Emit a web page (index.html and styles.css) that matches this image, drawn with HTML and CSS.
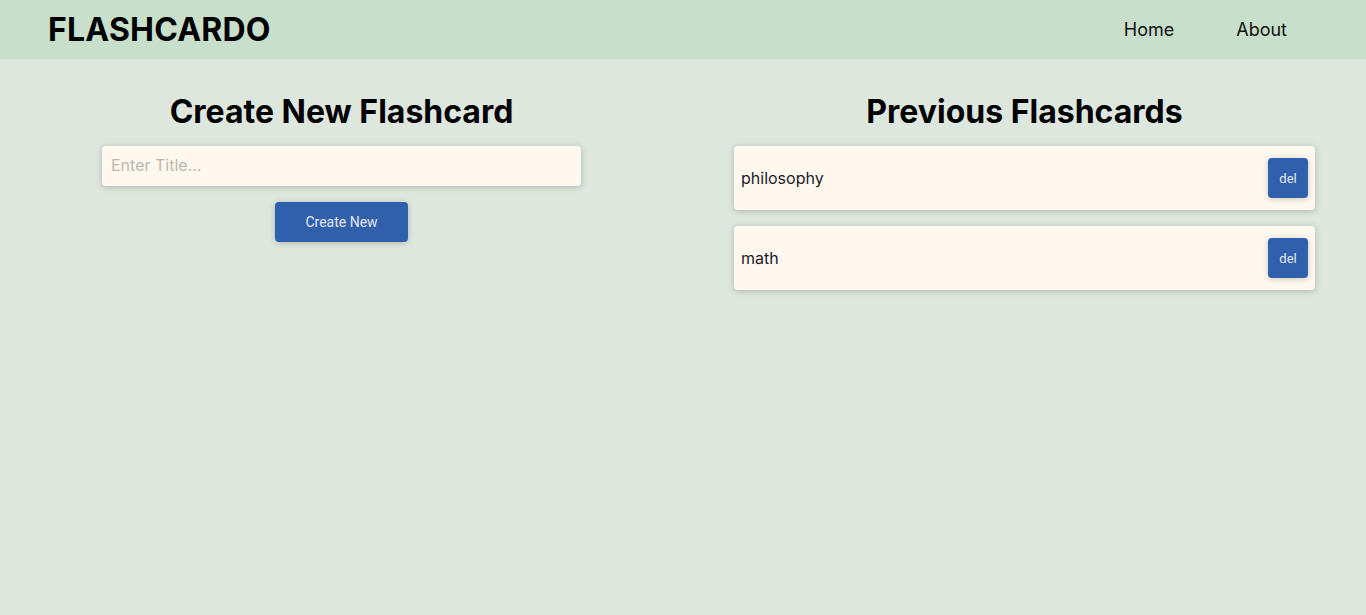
FILE: index.html
```html
<!DOCTYPE html>
<html>
<head>
<meta charset="utf-8">
<link rel="stylesheet" href="styles.css">
</head>
<body>
<header class="topbar">
  <div class="logo">FLASHCARDO</div>
  <nav class="nav">
    <a class="nav-link" href="#">Home</a>
    <a class="nav-link" href="#">About</a>
  </nav>
</header>
<main class="main">
  <section class="col">
    <h1 class="col-title">Create New Flashcard</h1>
    <input class="title-input" type="text" placeholder="Enter Title...">
    <button class="btn btn-create">Create New</button>
  </section>
  <section class="col">
    <h1 class="col-title">Previous Flashcards</h1>
    <div class="card-list">
      <div class="card"><span class="card-name">philosophy</span><button class="btn btn-del">del</button></div>
      <div class="card"><span class="card-name">math</span><button class="btn btn-del">del</button></div>
    </div>
  </section>
</main>
</body>
</html>
```
FILE: styles.css
```css
* { box-sizing: border-box; }
html, body { margin: 0; padding: 0; }
body {
  background: #dde7de;
  font-family: Inter, "Noto Sans", sans-serif;
  color: #000;
  min-height: 615px;
}
.topbar {
  height: 59px;
  background: #c8dfcb;
  display: flex;
  align-items: center;
  justify-content: space-between;
  padding: 0 47px 0 48px;
}
.logo {
  font-size: 32px;
  font-weight: 700;
  letter-spacing: 0.2px;
  line-height: 1;
  margin-top: 1px;
}
.nav { display: flex; }
.nav-link {
  font-size: 18px;
  color: #111;
  text-decoration: none;
  padding: 0 32px;
}
.nav-link + .nav-link { padding-left: 30px; }
.main {
  display: grid;
  grid-template-columns: 1fr 1fr;
}
.col {
  display: flex;
  flex-direction: column;
  align-items: center;
  padding-top: 33px;
}
.col-title {
  font-size: 32px;
  font-weight: 700;
  margin: 0 0 15px;
  line-height: 39px;
}
.title-input {
  width: 479px;
  height: 40px;
  border: none;
  border-radius: 4px;
  background: #fff8ee;
  box-shadow: 0 1px 6px rgba(0,0,0,0.22);
  padding: 0 9px 3px;
  font-family: Inter, sans-serif;
  font-size: 16px;
  color: #222;
  outline: none;
}
.title-input::placeholder { color: #bbb8b0; }
.btn {
  background: #3060ac;
  color: #e4e8f4;
  border: none;
  border-radius: 4px;
  font-family: Roboto, "Liberation Sans", sans-serif;
  box-shadow: 0 1px 6px rgba(0,0,0,0.2);
}
.btn-create {
  margin-top: 16px;
  width: 133px;
  height: 40px;
  font-size: 14px;
}
.card-list {
  width: 581px;
  display: flex;
  flex-direction: column;
  gap: 16px;
}
.card {
  height: 64px;
  background: #fff8ee;
  border-radius: 4px;
  box-shadow: 0 1px 6px rgba(0,0,0,0.22);
  display: flex;
  align-items: center;
  justify-content: space-between;
  padding: 0 7px;
}
.card-name {
  font-size: 16px;
  color: #1a1a2a;
}
.btn-del {
  width: 40px;
  height: 40px;
  font-size: 13px;
}
```
